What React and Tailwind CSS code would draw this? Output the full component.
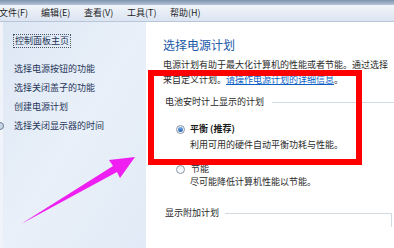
const menuItems = ["文件(F)", "编辑(E)", "查看(V)", "工具(T)", "帮助(H)"];

const sideLinks = ["选择电源按钮的功能", "选择关闭盖子的功能", "创建电源计划"];

function Radio({ checked }) {
  return (
    <span className="w-[9px] h-[9px] rounded-full border border-[#8a96a6] bg-gradient-to-b from-[#e8ecf1] to-white flex items-center justify-center shrink-0">
      {checked && <span className="w-[5px] h-[5px] rounded-full bg-gradient-to-b from-[#7fb0e8] to-[#1d5fb4]" />}
    </span>
  );
}

export default function App() {
  return (
    <div className="relative w-[394px] h-[248px] overflow-hidden bg-white font-['Noto_Sans_CJK_SC',sans-serif] text-[9px] text-[#2a2a2a]">
      {/* title strip */}
      <div className="h-[5px] bg-gradient-to-b from-[#7f93ad] to-[#b7c5d7]" />

      {/* menu bar */}
      <div className="h-[17px] flex items-center bg-gradient-to-b from-[#f1f5fb] to-[#dbe4f1] border-b border-[#b9c6d8] leading-[12px] text-[#1e1e1e]">
        {menuItems.map((m, i) => (
          <span key={m} className={i === 0 ? "w-[42px] -ml-[1px]" : "w-[43px]"}>{m}</span>
        ))}
      </div>

      <div className="flex h-[226px]">
        {/* left pane */}
        <div className="w-[146px] shrink-0 border-l-[3px] border-[#f0f4fa] bg-gradient-to-br from-[#dde7f4] via-[#e9f0f9] to-[#e1eaf6] pt-[12px] pl-[11px] leading-[12px] text-[#1f3558]">
          <div className="inline-block border border-dotted border-[#4a5566] px-[1px] -ml-[1px]">控制面板主页</div>
          <div className="mt-[15px] flex flex-col gap-[7px]">
            {sideLinks.map((s) => (
              <div key={s}>{s}</div>
            ))}
            <div className="flex items-center -ml-[18px] gap-[10px]">
              <span className="w-[8px] h-[8px] rounded-full border border-[#6c7c92] bg-[#c9d6e8]" />
              <span>选择关闭显示器的时间</span>
            </div>
          </div>
        </div>

        {/* main pane */}
        <div className="flex-1 pl-[17px] pt-[15px]">
          <div className="text-[12px] leading-[16px] text-[#2159a8]">选择电源计划</div>
          <div className="mt-[4px] leading-[15px] whitespace-nowrap">
            <div>电源计划有助于最大化计算机的性能或者节能。通过选择</div>
            <div>
              来自定义计划。
              <span className="text-[#0b5fc6] underline">请操作电源计划的详细信息</span>。
            </div>
          </div>

          <div className="mt-[9px] ml-[2px] flex items-center leading-[12px]">
            <span className="whitespace-nowrap">电池安时计上显示的计划</span>
            <span className="flex-1 ml-[8px] h-px bg-[#d3d9e1]" />
          </div>

          <div className="mt-[15px] ml-[13px] flex items-center gap-[5px] leading-[12px]">
            <Radio checked />
            <span className="font-bold text-[#1a1a1a]">平衡 (推荐)</span>
          </div>
          <div className="mt-[4px] ml-[27px] leading-[12px]">利用可用的硬件自动平衡功耗与性能。</div>

          <div className="mt-[12px] ml-[13px] flex items-center gap-[6px] leading-[12px]">
            <Radio />
            <span>节能</span>
          </div>
          <div className="mt-[1px] ml-[27px] leading-[12px]">尽可能降低计算机性能以节能。</div>

          <div className="mt-[19px] ml-[2px] flex items-start leading-[12px] pr-[2px]">
            <span className="whitespace-nowrap">显示附加计划</span>
            <span className="flex-1 ml-[6px] mt-[6px] h-[14px] border-t border-r border-[#d3d9e1]" />
          </div>
        </div>
      </div>

      {/* red annotation box */}
      <div className="absolute left-[148px] top-[70px] w-[214px] h-[95px] border-[6px] border-[#ff0000]" />

      {/* magenta arrow */}
      <svg className="absolute left-0 top-0" width="394" height="248" viewBox="0 0 394 248">
        <polygon
          points="21,224 113,166 109,160 135,157 120,178 117,172"
          fill="#ee1ff0"
        />
      </svg>
    </div>
  );
}
